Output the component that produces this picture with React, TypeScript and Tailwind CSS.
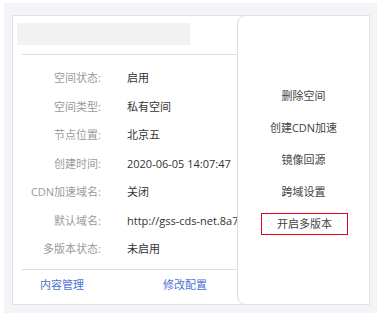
const font = { fontFamily: '"Open Sans", "Noto Sans CJK SC", sans-serif' };

const rows: [string, string][] = [
  ['空间状态:', '启用'],
  ['空间类型:', '私有空间'],
  ['节点位置:', '北京五'],
  ['创建时间:', '2020-06-05 14:07:47'],
  ['CDN加速域名:', '关闭'],
  ['默认域名:', 'http://gss-cds-net.8a7c3e.bj.bcebos.com'],
  ['多版本状态:', '未启用'],
];

const menu = ['删除空间', '创建CDN加速', '镜像回源', '跨域设置'];

export default function App() {
  return (
    <div className="w-[381px] h-[317px] bg-white pt-[3px] pl-[4px]" style={font}>
      <div className="w-[373px] h-[310px] bg-[#f3f4f8] pt-[12px] pl-[8px]">
        <div className="relative w-[358px] h-[290px] bg-white border border-[#e2e2e2] overflow-hidden">
          <div className="ml-[4px] mt-[7px] w-[173px] h-[22px] bg-[#f2f2f2]" />
          <div className="ml-[9px] mr-[9px] mt-[9px] h-px bg-[#dedede]" />

          <div className="mt-[9px]">
            {rows.map(([label, value]) => (
              <div key={label} className="flex items-center h-[28.5px] text-[11px] whitespace-nowrap">
                <div className="w-[88px] shrink-0 text-right text-[#9a9a9a]">{label}</div>
                <div className="ml-[26px] text-[#333]">{value}</div>
              </div>
            ))}
          </div>

          <div className="ml-[9px] mr-[9px] mt-[5px] h-px bg-[#dedede]" />
          <div className="flex items-center h-[32px] text-[11px] text-[#4e72d3]">
            <span className="ml-[27px]">内容管理</span>
            <span className="ml-[79px]">修改配置</span>
          </div>

          <div className="absolute left-[224px] -top-px -right-px -bottom-px bg-white border border-[#dcdcdc] rounded-l-[9px] pt-[64px] flex flex-col items-center text-[11px] text-[#444]">
            {menu.map((m) => (
              <div key={m} className="h-[32px] flex items-center">{m}</div>
            ))}
            <div className="h-[32px] flex items-center pl-[2px]">
              <span className="inline-block px-[15px] py-[2px] leading-[16px] border border-[#e60012]">开启多版本</span>
            </div>
          </div>
        </div>
      </div>
    </div>
  );
}
